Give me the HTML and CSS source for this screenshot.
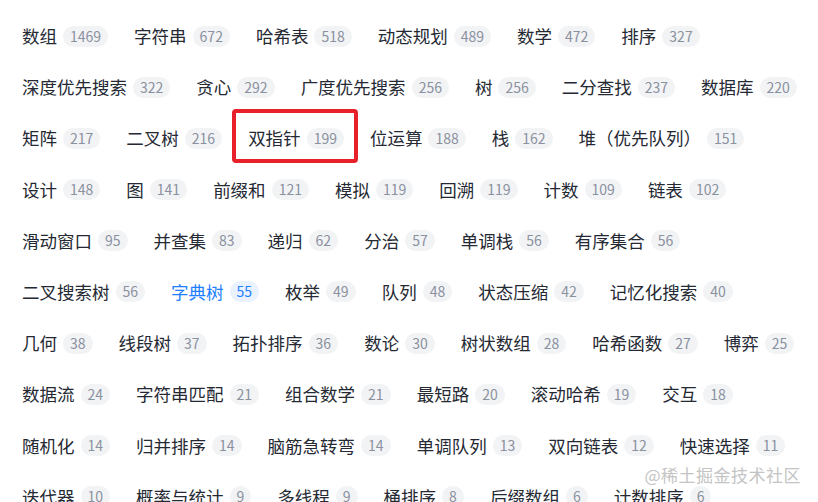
FILE: index.html
```html
<!DOCTYPE html>
<html lang="zh-CN">
<head>
    <meta charset="UTF-8">
    <meta name="viewport" content="width=device-width, initial-scale=1.0">
    <title>题目标签</title>
    <link rel="stylesheet" href="styles.css">
</head>
<body>
    <div class="tag-list">
        <span class="tag"><span class="tag-name">数组</span><span class="tag-count">1469</span></span>
        <span class="tag"><span class="tag-name">字符串</span><span class="tag-count">672</span></span>
        <span class="tag"><span class="tag-name">哈希表</span><span class="tag-count">518</span></span>
        <span class="tag"><span class="tag-name">动态规划</span><span class="tag-count">489</span></span>
        <span class="tag"><span class="tag-name">数学</span><span class="tag-count">472</span></span>
        <span class="tag"><span class="tag-name">排序</span><span class="tag-count">327</span></span>
        <span class="tag"><span class="tag-name">深度优先搜索</span><span class="tag-count">322</span></span>
        <span class="tag"><span class="tag-name">贪心</span><span class="tag-count">292</span></span>
        <span class="tag"><span class="tag-name">广度优先搜索</span><span class="tag-count">256</span></span>
        <span class="tag"><span class="tag-name">树</span><span class="tag-count">256</span></span>
        <span class="tag"><span class="tag-name">二分查找</span><span class="tag-count">237</span></span>
        <span class="tag"><span class="tag-name">数据库</span><span class="tag-count">220</span></span>
        <span class="tag"><span class="tag-name">矩阵</span><span class="tag-count">217</span></span>
        <span class="tag"><span class="tag-name">二叉树</span><span class="tag-count">216</span></span>
        <span class="tag marked"><span class="tag-name">双指针</span><span class="tag-count">199</span></span>
        <span class="tag"><span class="tag-name">位运算</span><span class="tag-count">188</span></span>
        <span class="tag"><span class="tag-name">栈</span><span class="tag-count">162</span></span>
        <span class="tag"><span class="tag-name">堆（优先队列）</span><span class="tag-count">151</span></span>
        <span class="tag"><span class="tag-name">设计</span><span class="tag-count">148</span></span>
        <span class="tag"><span class="tag-name">图</span><span class="tag-count">141</span></span>
        <span class="tag"><span class="tag-name">前缀和</span><span class="tag-count">121</span></span>
        <span class="tag"><span class="tag-name">模拟</span><span class="tag-count">119</span></span>
        <span class="tag"><span class="tag-name">回溯</span><span class="tag-count">119</span></span>
        <span class="tag"><span class="tag-name">计数</span><span class="tag-count">109</span></span>
        <span class="tag"><span class="tag-name">链表</span><span class="tag-count">102</span></span>
        <span class="tag"><span class="tag-name">滑动窗口</span><span class="tag-count">95</span></span>
        <span class="tag"><span class="tag-name">并查集</span><span class="tag-count">83</span></span>
        <span class="tag"><span class="tag-name">递归</span><span class="tag-count">62</span></span>
        <span class="tag"><span class="tag-name">分治</span><span class="tag-count">57</span></span>
        <span class="tag"><span class="tag-name">单调栈</span><span class="tag-count">56</span></span>
        <span class="tag"><span class="tag-name">有序集合</span><span class="tag-count">56</span></span>
        <span class="tag"><span class="tag-name">二叉搜索树</span><span class="tag-count">56</span></span>
        <span class="tag active"><span class="tag-name">字典树</span><span class="tag-count">55</span></span>
        <span class="tag"><span class="tag-name">枚举</span><span class="tag-count">49</span></span>
        <span class="tag"><span class="tag-name">队列</span><span class="tag-count">48</span></span>
        <span class="tag"><span class="tag-name">状态压缩</span><span class="tag-count">42</span></span>
        <span class="tag"><span class="tag-name">记忆化搜索</span><span class="tag-count">40</span></span>
        <span class="tag"><span class="tag-name">几何</span><span class="tag-count">38</span></span>
        <span class="tag"><span class="tag-name">线段树</span><span class="tag-count">37</span></span>
        <span class="tag"><span class="tag-name">拓扑排序</span><span class="tag-count">36</span></span>
        <span class="tag"><span class="tag-name">数论</span><span class="tag-count">30</span></span>
        <span class="tag"><span class="tag-name">树状数组</span><span class="tag-count">28</span></span>
        <span class="tag"><span class="tag-name">哈希函数</span><span class="tag-count">27</span></span>
        <span class="tag"><span class="tag-name">博弈</span><span class="tag-count">25</span></span>
        <span class="tag"><span class="tag-name">数据流</span><span class="tag-count">24</span></span>
        <span class="tag"><span class="tag-name">字符串匹配</span><span class="tag-count">21</span></span>
        <span class="tag"><span class="tag-name">组合数学</span><span class="tag-count">21</span></span>
        <span class="tag"><span class="tag-name">最短路</span><span class="tag-count">20</span></span>
        <span class="tag"><span class="tag-name">滚动哈希</span><span class="tag-count">19</span></span>
        <span class="tag"><span class="tag-name">交互</span><span class="tag-count">18</span></span>
        <span class="tag"><span class="tag-name">随机化</span><span class="tag-count">14</span></span>
        <span class="tag"><span class="tag-name">归并排序</span><span class="tag-count">14</span></span>
        <span class="tag"><span class="tag-name">脑筋急转弯</span><span class="tag-count">14</span></span>
        <span class="tag"><span class="tag-name">单调队列</span><span class="tag-count">13</span></span>
        <span class="tag"><span class="tag-name">双向链表</span><span class="tag-count">12</span></span>
        <span class="tag"><span class="tag-name">快速选择</span><span class="tag-count">11</span></span>
        <span class="tag"><span class="tag-name">迭代器</span><span class="tag-count">10</span></span>
        <span class="tag"><span class="tag-name">概率与统计</span><span class="tag-count">9</span></span>
        <span class="tag"><span class="tag-name">多线程</span><span class="tag-count">9</span></span>
        <span class="tag"><span class="tag-name">桶排序</span><span class="tag-count">8</span></span>
        <span class="tag"><span class="tag-name">后缀数组</span><span class="tag-count">6</span></span>
        <span class="tag"><span class="tag-name">计数排序</span><span class="tag-count">6</span></span>
    </div>

    <div class="watermark">@稀土掘金技术社区</div>
</body>
</html>
```

FILE: styles.css
```css
* {
    margin: 0;
    padding: 0;
    box-sizing: border-box;
}

body {
    background: #fff;
    font-family: "Noto Sans CJK SC", "Noto Sans", sans-serif;
    width: 818px;
    height: 502px;
    overflow: hidden;
    position: relative;
}

.tag-list {
    display: flex;
    flex-wrap: wrap;
    column-gap: 26px;
    row-gap: 29.2px;
    padding: 25px 0 0 22px;
}

.tag {
    display: flex;
    align-items: center;
    gap: 6px;
    height: 22px;
    position: relative;
    cursor: pointer;
}

.tag-name {
    font-size: 17.5px;
    line-height: 22px;
    color: #252933;
    white-space: nowrap;
}

.tag-count {
    height: 21px;
    line-height: 21px;
    padding: 0 7px;
    border-radius: 11px;
    background: #f2f3f5;
    color: #8a919f;
    font-size: 14px;
}

.tag.active .tag-name {
    color: #1e80ff;
}

.tag.active .tag-count {
    background: #eaf2ff;
    color: #1e80ff;
}

/* highlight frame drawn over the item */
.tag.marked::after {
    content: "";
    position: absolute;
    top: -18px;
    bottom: -14px;
    left: -16px;
    right: -14px;
    border: 4px solid #e8202a;
    border-radius: 4px;
}

.watermark {
    position: absolute;
    right: 17px;
    bottom: 15px;
    font-size: 17px;
    color: #c4c4c4;
    text-shadow: 0 0 2px #fff, 0 0 2px #fff;
    letter-spacing: 0.5px;
}
```
